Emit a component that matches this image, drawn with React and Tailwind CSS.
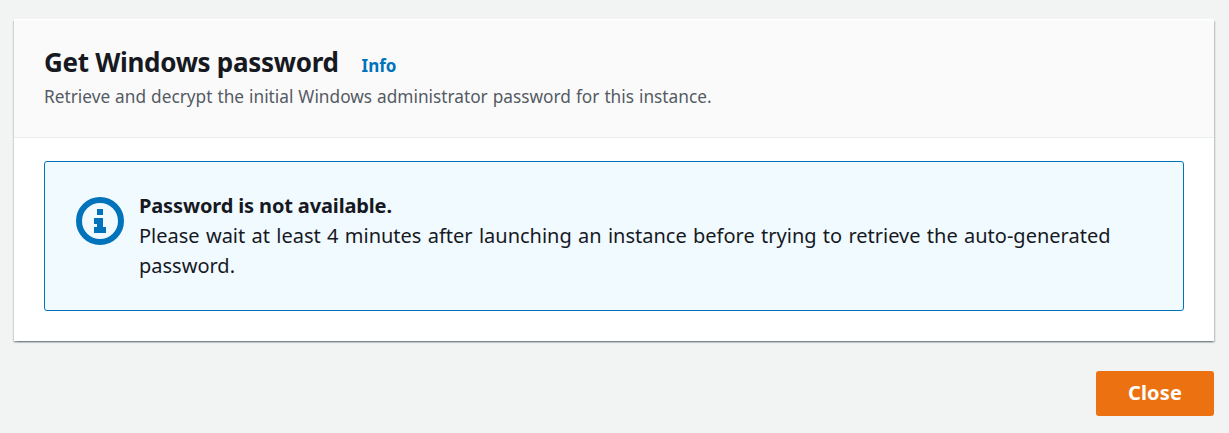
function InfoIcon() {
  return (
    <svg className="h-12 w-12 shrink-0" viewBox="0 0 48 48" fill="none" aria-hidden="true">
      <circle cx="24" cy="24" r="21" stroke="#0073bb" strokeWidth="6" />
      <path d="M21 12h6v6h-6zM18 21h9v9h3v6H18v-6h3v-3h-3z" fill="#0073bb" />
    </svg>
  );
}

function Panel() {
  return (
    <section className="h-[322px] bg-white shadow-[0_1.5px_1.5px_0_rgba(0,28,36,0.3),1.5px_1.5px_1.5px_0_rgba(0,28,36,0.15),-1.5px_1.5px_1.5px_0_rgba(0,28,36,0.15)]">
      <header className="h-[119px] border-t border-b border-t-white border-b-[#eaeded] bg-[#fafafa] px-[30px] pt-[24px]">
        <div className="flex items-baseline gap-[23px] whitespace-nowrap">
          <h1 className="text-[26px] leading-[36px] font-bold tracking-[-0.3px]">Get Windows password</h1>
          <a href="#info" className="text-[17px] leading-[30px] font-bold text-[#0073bb]">Info</a>
        </div>
        <p className="mt-px text-[17.25px] leading-[30px] whitespace-nowrap text-[#545b64] [word-spacing:0.5px]">
          Retrieve and decrypt the initial Windows administrator password for this instance.
        </p>
      </header>
      <div className="px-[30px] pt-[23px]">
        <div className="flex h-[150px] gap-[15px] rounded-[3px] border border-[#0073bb] bg-[#f1faff] pt-[29px] pl-[31px] text-[20px] leading-[30px]">
          <div className="pt-[6px]">
            <InfoIcon />
          </div>
          <div className="whitespace-nowrap">
            <p className="font-bold tracking-[-0.14px]">Password is not available.</p>
            <p className="[word-spacing:1.1px]">
              Please wait at least 4 minutes after launching an instance before trying to retrieve the auto-generated
              <br />
              password.
            </p>
          </div>
        </div>
      </div>
    </section>
  );
}

export default function App() {
  return (
    <main className="h-[433px] overflow-hidden bg-[#f2f3f3] pt-[19px] pr-[15px] pl-[14px] font-['Noto_Sans',sans-serif] text-[#16191f]">
      <Panel />
      <div className="flex justify-end pt-[30px]">
        <button className="h-[45px] w-[118px] rounded-[3px] bg-[#ec7211] pb-[2px] text-[20px] leading-[30px] font-bold tracking-[0.15px] text-white">
          Close
        </button>
      </div>
    </main>
  );
}
